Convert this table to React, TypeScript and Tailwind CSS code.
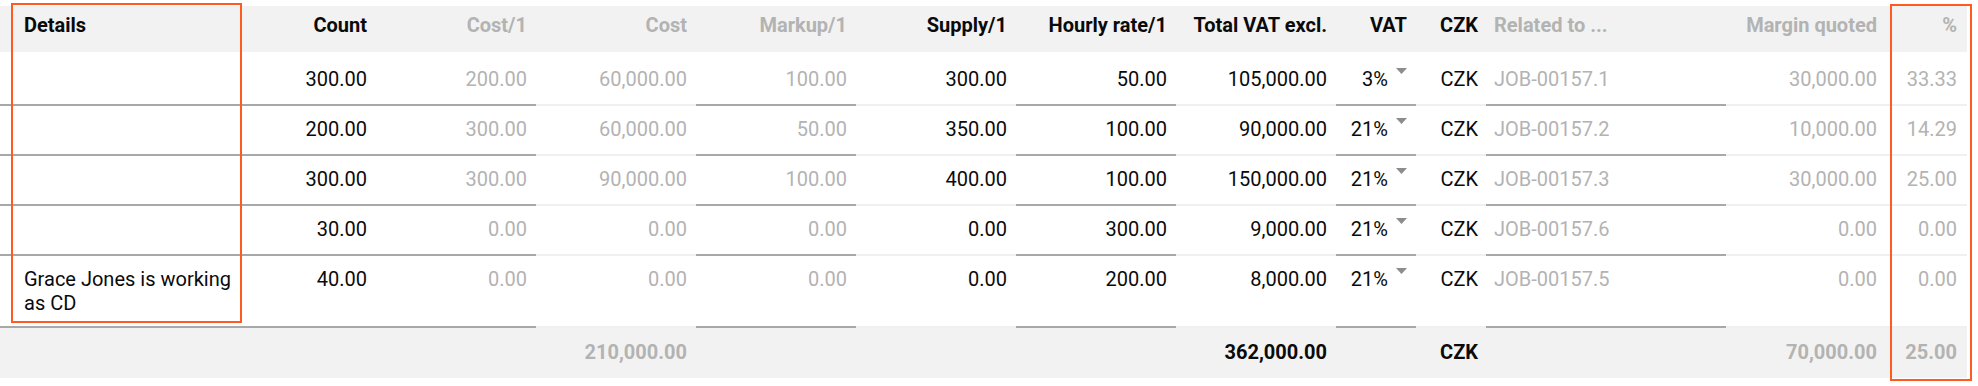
import React from "react";

type Cell = { v: string; c: "k" | "g" };

const cols =
  "grid grid-cols-[242px_134px_160px_160px_160px_160px_160px_160px_80px_70px_240px_161px_80px]";

const rows: string[][] = [
  ["", "300.00", "200.00", "60,000.00", "100.00", "300.00", "50.00", "105,000.00", "3%", "CZK", "JOB-00157.1", "30,000.00", "33.33"],
  ["", "200.00", "300.00", "60,000.00", "50.00", "350.00", "100.00", "90,000.00", "21%", "CZK", "JOB-00157.2", "10,000.00", "14.29"],
  ["", "300.00", "300.00", "90,000.00", "100.00", "400.00", "100.00", "150,000.00", "21%", "CZK", "JOB-00157.3", "30,000.00", "25.00"],
  ["", "30.00", "0.00", "0.00", "0.00", "0.00", "300.00", "9,000.00", "21%", "CZK", "JOB-00157.6", "0.00", "0.00"],
  ["Grace Jones is working as CD", "40.00", "0.00", "0.00", "0.00", "0.00", "200.00", "8,000.00", "21%", "CZK", "JOB-00157.5", "0.00", "0.00"],
];

// per column: colour, underline dark?
const grey = [false, false, true, true, true, false, false, false, false, false, true, true, true];
const dark = [true, true, true, false, true, false, true, false, true, false, true, false, false];

function Caret() {
  return (
    <svg width="11" height="6" viewBox="0 0 11 6" className="ml-[8px] mt-[1px] shrink-0">
      <polygon points="0,0 11,0 5.5,6" fill="#8c8c8c" />
    </svg>
  );
}

function DataRow({ r, first }: { r: string[]; first: boolean }) {
  return (
    <div className={cols}>
      {r.map((v, i) => {
        const color = grey[i] ? "text-[#b3b3b3]" : "text-[#0a0a0a]";
        const border = dark[i] ? "border-[#a8a8a8]" : "border-[#f0f0f0]";
        const pad = first ? "pt-[15px] min-h-[54px]" : "pt-[11px] min-h-[50px]";
        let align = "justify-end pr-[9px]";
        if (i === 0) align = "justify-start pl-[24px] pr-[4px]";
        if (i === 9) align = "justify-end pr-[8px]";
        if (i === 10) align = "justify-start pl-[8px]";
        if (i === 11 || i === 12) align = "justify-end pr-[10px]";
        return (
          <div
            key={i}
            className={`flex items-start border-b-2 ${border} ${pad} pb-[11px] ${align} ${color}`}
          >
            <span>{v}</span>
            {i === 8 && <Caret />}
          </div>
        );
      })}
    </div>
  );
}

const headers: { t: string; g: boolean }[] = [
  { t: "Details", g: false },
  { t: "Count", g: false },
  { t: "Cost/1", g: true },
  { t: "Cost", g: true },
  { t: "Markup/1", g: true },
  { t: "Supply/1", g: false },
  { t: "Hourly rate/1", g: false },
  { t: "Total VAT excl.", g: false },
  { t: "VAT", g: false },
  { t: "CZK", g: false },
  { t: "Related to ...", g: true },
  { t: "Margin quoted", g: true },
  { t: "%", g: true },
];

const totals: { t: string; g: boolean }[] = [
  { t: "", g: false },
  { t: "", g: false },
  { t: "", g: false },
  { t: "210,000.00", g: true },
  { t: "", g: false },
  { t: "", g: false },
  { t: "", g: false },
  { t: "362,000.00", g: false },
  { t: "", g: false },
  { t: "CZK", g: false },
  { t: "", g: false },
  { t: "70,000.00", g: true },
  { t: "25.00", g: true },
];

function alignFor(i: number) {
  if (i === 0) return "justify-start pl-[24px]";
  if (i === 9) return "justify-end pr-[8px]";
  if (i === 10) return "justify-start pl-[8px]";
  if (i === 11 || i === 12) return "justify-end pr-[10px]";
  return "justify-end pr-[9px]";
}

export default function App() {
  return (
    <div className="relative w-[1978px] h-[386px] bg-white pt-[6px] font-[Roboto,sans-serif] text-[20px] leading-[24px] overflow-hidden">
      <div className="w-[1967px]">
        {/* header */}
        <div className={`${cols} bg-[#f2f2f2] h-[46px] font-bold`}>
          {headers.map((h, i) => (
            <div
              key={i}
              className={`flex items-start pt-[7px] ${alignFor(i)} ${h.g ? "text-[#b3b3b3]" : "text-[#0a0a0a]"}`}
            >
              {h.t}
            </div>
          ))}
        </div>
        {rows.map((r, idx) => (
          <DataRow key={idx} r={r} first={idx === 0} />
        ))}
        {/* totals */}
        <div className={`${cols} bg-[#f2f2f2] h-[50px] font-bold`}>
          {totals.map((h, i) => (
            <div
              key={i}
              className={`flex items-start pt-[12px] ${alignFor(i)} ${h.g ? "text-[#b3b3b3]" : "text-[#0a0a0a]"}`}
            >
              {h.t}
            </div>
          ))}
        </div>
      </div>
      {/* annotation boxes */}
      <div className="absolute left-[11px] top-[3px] w-[231px] h-[320px] border-2 border-[#ff5a1f] pointer-events-none" />
      <div className="absolute left-[1890px] top-[4px] w-[82px] h-[377px] border-2 border-[#ff5a1f] pointer-events-none" />
    </div>
  );
}
